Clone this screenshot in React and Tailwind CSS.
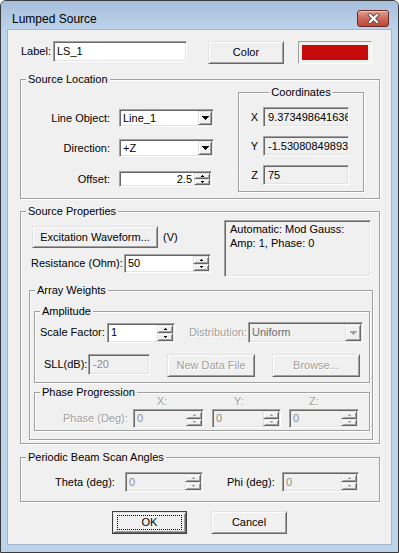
import React from 'react';

// classic win32 bevels
const sunkenCls =
  'border border-t-[#a0a0a0] border-l-[#a0a0a0] border-r-white border-b-white shadow-[inset_1px_1px_0_#696969,inset_-1px_-1px_0_#e3e3e3] p-px';
const raisedCls =
  'border border-t-[#e3e3e3] border-l-[#e3e3e3] border-r-[#696969] border-b-[#696969] shadow-[inset_1px_1px_0_#ffffff,inset_-1px_-1px_0_#a0a0a0] bg-[#f0f0f0]';
const grayText = 'text-[#a0a0a0] [text-shadow:1px_1px_0_#ffffff]';

const Tri = ({ up, color = '#000', small }) => {
  const rows = small ? [1, 3] : [1, 3, 5, 7];
  const w = rows[rows.length - 1];
  const list = up ? rows : [...rows].reverse();
  return (
    <svg width={w} height={rows.length} viewBox={`0 0 ${w} ${rows.length}`} shapeRendering="crispEdges">
      {list.map((r, i) => (
        <rect key={i} x={(w - r) / 2} y={i} width={r} height="1" fill={color} />
      ))}
    </svg>
  );
};

function Btn({ className = '', disabled, children }) {
  return (
    <div className={`${raisedCls} flex items-center justify-center ${disabled ? grayText : 'text-black'} ${className}`}>
      {children}
    </div>
  );
}

function Group({ title, center, className = '', children }) {
  return (
    <div className={`relative border border-[#a0a0a0] shadow-[1px_1px_0_#ffffff,inset_1px_1px_0_#ffffff] ${className}`}>
      <span
        className={`absolute -top-[7px] bg-[#f0f0f0] px-[2px] leading-[13px] whitespace-nowrap ${
          center ? 'left-1/2 -translate-x-1/2' : 'left-[5px]'
        }`}
      >
        {title}
      </span>
      {children}
    </div>
  );
}

function Spinner({ className = '', value, disabled, right }) {
  const arrow = disabled ? '#a0a0a0' : '#000';
  return (
    <div className={`${sunkenCls} flex ${disabled ? 'bg-[#f0f0f0]' : 'bg-white'} ${className}`}>
      <div
        className={`flex-1 flex items-center overflow-hidden whitespace-nowrap px-[2px] ${right ? 'justify-end' : ''} ${
          disabled ? 'text-[#8c8c8c]' : 'text-black'
        }`}
      >
        {value}
      </div>
      <div className="flex flex-col w-[16px]">
        <Btn className="flex-1">
          <Tri up small color={arrow} />
        </Btn>
        <Btn className="flex-1">
          <Tri small color={arrow} />
        </Btn>
      </div>
    </div>
  );
}

function Combo({ className = '', value, disabled, btnW = 'w-[14px]' }) {
  return (
    <div className={`${sunkenCls} flex ${disabled ? 'bg-[#f0f0f0]' : 'bg-white'} ${className}`}>
      <div className={`flex-1 flex items-center pl-[2px] ${disabled ? 'text-[#6d6d6d]' : 'text-black'}`}>{value}</div>
      <Btn className={`${btnW} h-full`}>
        <Tri color={disabled ? '#a0a0a0' : '#000'} />
      </Btn>
    </div>
  );
}

function ReadOnly({ className = '', value, disabled }) {
  return (
    <div className={`${sunkenCls} bg-[#f0f0f0] flex items-center overflow-hidden whitespace-nowrap ${className}`}>
      <span className={`ml-[3px] ${disabled ? 'text-[#8c8c8c]' : 'text-black'}`}>{value}</span>
    </div>
  );
}

const CloseButton = () => (
  <div className="ml-auto mr-[9px] mt-[9px] w-[32px] h-[17px] rounded-[3px] border border-[#6b2b26] bg-linear-to-b from-[#e1a091] via-[#cf6a5b] to-[#c1453a] shadow-[inset_0_1px_0_#f0c3b8] flex items-center justify-center">
    <svg width="13" height="11" viewBox="0 0 13 11">
      <path d="M3 2 L10 9 M10 2 L3 9" stroke="#5b4a48" strokeWidth="4" strokeLinecap="square" />
      <path d="M3 2 L10 9 M10 2 L3 9" stroke="#ffffff" strokeWidth="2.2" strokeLinecap="square" />
    </svg>
  </div>
);

export default function App() {
  return (
    <div className="w-[399px] h-[553px] bg-white">
      <div className="w-[399px] h-[553px] font-['Liberation_Sans',Arial,sans-serif] text-[11px] leading-[13px] text-black bg-[#bcd3eb] border border-[#3a3a3a] rounded-t-[6px] flex flex-col overflow-hidden">
        {/* title bar */}
        <div className="h-[29px] flex items-start bg-linear-to-b from-[#a7bfdb] to-[#bcd3eb]">
          <span className="ml-[11px] mt-[11px] text-[12px] leading-[14px]">Lumped Source</span>
          <CloseButton />
        </div>

        {/* client area */}
        <div className="ml-[7px] w-[383px] h-[514px] bg-[#f0f0f0] ring-1 ring-[#a3b8cf] flex flex-col">
          <div className="mt-[11px] ml-[13px] flex items-start h-[23px]">
            <span className="w-[32px] leading-[21px]">Label:</span>
            <div className={`${sunkenCls} bg-white w-[134px] h-[21px] flex items-center`}>
              <span className="ml-[2px]">LS_1</span>
            </div>
            <Btn className="ml-[21px] w-[76px] h-[23px]">Color</Btn>
            <div className="ml-[14px] w-[74px] h-[23px] border border-t-[#a0a0a0] border-l-[#a0a0a0] border-r-white border-b-white p-[3px]">
              <div className="h-full bg-[#c80a0a]" />
            </div>
          </div>

          {/* Source Location */}
          <Group title="Source Location" className="mt-[15px] ml-[12px] w-[360px] h-[120px] flex items-start">
            <div className="flex flex-col pt-[29px]">
              <div className="flex items-center">
                <span className="w-[89px] text-right">Line Object:</span>
                <Combo className="ml-[9px] w-[95px] h-[18px]" value="Line_1" />
              </div>
              <div className="flex items-center mt-[12px]">
                <span className="w-[89px] text-right">Direction:</span>
                <Combo className="ml-[9px] w-[95px] h-[18px]" value="+Z" />
              </div>
              <div className="flex items-center mt-[14px]">
                <span className="w-[89px] text-right">Offset:</span>
                <Spinner className="ml-[9px] w-[93px] h-[16px]" value="2.5" right />
              </div>
            </div>
            <Group title="Coordinates" center className="ml-[24px] mt-[12px] w-[126px] h-[100px] flex flex-col pt-[14px] pl-[7px] gap-[9px]">
              <div className="flex items-center">
                <span className="w-[17px] text-center">X</span>
                <ReadOnly className="w-[86px] h-[20px]" value="9.3734986416362" />
              </div>
              <div className="flex items-center">
                <span className="w-[17px] text-center">Y</span>
                <ReadOnly className="w-[86px] h-[20px]" value="-1.5308084989336" />
              </div>
              <div className="flex items-center">
                <span className="w-[17px] text-center">Z</span>
                <ReadOnly className="w-[86px] h-[20px]" value="75" />
              </div>
            </Group>
          </Group>

          {/* Source Properties */}
          <Group title="Source Properties" className="mt-[12px] ml-[12px] w-[360px] h-[233px] flex flex-col">
            <div className="flex items-start">
              <div className="flex flex-col">
                <div className="mt-[14px] ml-[11px] flex items-center">
                  <Btn className="w-[126px] h-[22px]">Excitation Waveform...</Btn>
                  <span className="ml-[5px]">(V)</span>
                </div>
                <div className="mt-[6px] ml-[10px] flex items-center">
                  <span className="w-[93px]">Resistance (Ohm):</span>
                  <Spinner className="w-[87px] h-[19px]" value="50" />
                </div>
              </div>
              <div className={`${sunkenCls} ml-auto mr-[8px] mt-[8px] w-[147px] h-[57px] bg-[#f0f0f0] pl-[5px] pt-[1px] leading-[14px]`}>
                Automatic: Mod Gauss:
                <br />
                Amp: 1, Phase: 0
              </div>
            </div>

            <Group title="Array Weights" className="mt-[13px] ml-[8px] w-[344px] h-[150px] flex flex-col">
              <Group title="Amplitude" className="mt-[20px] ml-[4px] w-[336px] h-[72px] flex flex-col">
                <div className="mt-[10px] ml-[5px] flex items-center h-[21px]">
                  <span className="w-[67px]">Scale Factor:</span>
                  <Spinner className="w-[68px] h-[20px]" value="1" />
                  <span className={`w-[73px] text-right pr-[1px] ${grayText}`}>Distribution:</span>
                  <Combo className="w-[115px] h-[21px]" value="Uniform" disabled btnW="w-[16px]" />
                </div>
                <div className="mt-[11px] ml-[9px] flex items-start">
                  <span className="w-[44px] leading-[21px]">SLL(dB):</span>
                  <ReadOnly className="w-[62px] h-[21px]" value="-20" disabled />
                  <Btn disabled className="ml-[17px] w-[88px] h-[23px]">
                    New Data File
                  </Btn>
                  <Btn disabled className="ml-[17px] w-[88px] h-[23px]">
                    Browse...
                  </Btn>
                </div>
              </Group>

              <Group title="Phase Progression" className="mt-[9px] ml-[4px] w-[336px] h-[39px] flex items-end">
                <span className={`ml-[28px] w-[70px] leading-[19px] mb-[2px] ${grayText}`}>Phase (Deg):</span>
                <div className="flex flex-col w-[71px] mb-[2px]">
                  <span className={`pl-[24px] ${grayText}`}>X:</span>
                  <Spinner className="mt-[1px] w-[71px] h-[19px]" value="0" disabled />
                </div>
                <div className="flex flex-col w-[69px] ml-[8px] mb-[2px]">
                  <span className={`pl-[22px] ${grayText}`}>Y:</span>
                  <Spinner className="mt-[1px] w-[69px] h-[19px]" value="0" disabled />
                </div>
                <div className="flex flex-col w-[70px] ml-[8px] mb-[2px]">
                  <span className={`pl-[20px] ${grayText}`}>Z:</span>
                  <Spinner className="mt-[1px] w-[70px] h-[19px]" value="0" disabled />
                </div>
              </Group>
            </Group>
          </Group>

          {/* Periodic Beam Scan Angles */}
          <Group title="Periodic Beam Scan Angles" className="mt-[13px] ml-[12px] w-[360px] h-[45px] flex flex-col">
            <div className="mt-[14px] ml-[34px] flex items-center">
              <span className="w-[70px]">Theta (deg):</span>
              <Spinner className="w-[78px] h-[20px]" value="0" disabled />
              <span className="ml-[24px] w-[55px]">Phi (deg):</span>
              <Spinner className="w-[77px] h-[20px]" value="0" disabled />
            </div>
          </Group>

          {/* buttons */}
          <div className="mt-[9px] flex">
            <div className="ml-[104px] w-[75px] h-[23px] border border-[#404040]">
              <Btn className="w-full h-full">
                <div className="w-[65px] h-[15px] border border-dotted border-black flex items-center justify-center">OK</div>
              </Btn>
            </div>
            <Btn className="ml-[24px] w-[76px] h-[23px]">Cancel</Btn>
          </div>
        </div>
      </div>
    </div>
  );
}
